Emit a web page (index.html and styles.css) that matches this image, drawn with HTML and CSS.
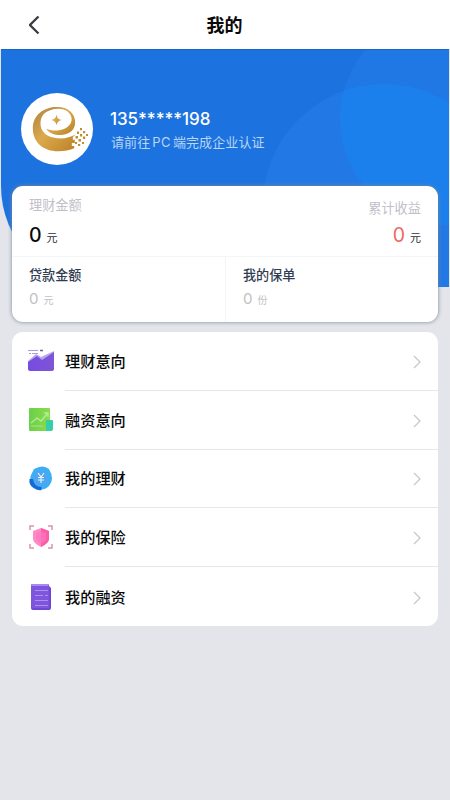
FILE: index.html
```
<!DOCTYPE html>
<html lang="zh-CN">
<head>
<meta charset="utf-8">
<meta name="viewport" content="width=device-width">
<title>我的</title>
<link rel="stylesheet" href="styles.css">
</head>
<body>
<header class="nav">
  <svg class="back" width="12" height="20" viewBox="0 0 12 20"><path d="M9.500 1.500 1 10l8.500 8.500" fill="none" stroke="#3c3d42" stroke-width="2.300"/></svg>
  <h1>我的</h1>
</header>
<main class="page">
  <svg class="backdrop" width="448" height="238" viewBox="1 49 448 238">
    <defs><clipPath id="hero"><path d="M1 49H449V287H102A101 101 0 0 1 1 186Z"/></clipPath>
    <clipPath id="orb"><circle cx="384" cy="205" r="121"/></clipPath></defs>
    <g clip-path="url(#hero)">
      <rect x="1" y="49" width="448" height="238" fill="#1c73df"/>
      <circle cx="446" cy="119" r="106" fill="#1f78e3"/>
      <circle cx="384" cy="205" r="121" fill="#2279e5"/>
      <circle cx="446" cy="119" r="106" fill="#1b80ec" clip-path="url(#orb)"/>
      <path d="M1 49.500H449" stroke="#1966c6"/>
    </g>
  </svg>
  <section class="profile">
    <svg class="avatar" width="72" height="72" viewBox="0 0 72 72">
      <defs><linearGradient id="gold" x1="0" y1="0" x2="1" y2="1"><stop offset="0" stop-color="#ad8040"/><stop offset=".45" stop-color="#dda94d"/><stop offset="1" stop-color="#b98125"/></linearGradient></defs>
      <circle cx="36" cy="36" r="36" fill="#fff"/>
      <g transform="scale(.3333) translate(-31.500 -24)" fill="url(#gold)">
        <path d="M140 66C100 66 67 90 67 130C67 174 100 199 143 199C162 199 178 196 191 190L191 183H184V174H193V164H187V156L196 148C180 158 160 162 140 160C105 156 89 137 90 114C91 88 110 73 140 70Z"/>
        <path d="M103 84C116 69 130 66 145 66C173 67 194 86 194 112C194 137 174 150 150 150C130 150 115 143 107 131C122 137 144 139 162 131C178 123 185 112 183 98C180 81 163 71 143 71C126 71 113 76 103 84Z"/>
        <path d="M138 89Q140 103 154 105Q140 107 138 121Q136 107 122 105Q136 103 138 89Z"/>
      </g>
      <path d="M59 35h2v2.200h-2zM56 38.500h2V41h-2zM62 38h2.200v2.200H62zM59 41h2.200v2.500H59zM65 41h2v2h-2zM54.500 43h2.500v2.500h-2.500zM62 43.500h2.200V46H62zM57.500 46h2.500v2.500h-2.500zM54 49h2v2h-2zM61 49h2v2h-2zM57 51h2.200v2H57z" fill="#c28d31"/>
    </svg>
    <div class="identity">
      <div class="phone">135*****198</div>
      <div class="notice">请前往<span class="latin">PC</span>端完成企业认证</div>
    </div>
  </section>
  <section class="assets">
    <div class="summary">
      <div><div class="label">理财金额</div><div class="amount">0<small>元</small></div></div>
      <div class="income"><div class="label">累计收益</div><div class="amount">0<small>元</small></div></div>
    </div>
    <div class="details">
      <div class="detail"><div class="name">贷款金额</div><div class="value">0<small>元</small></div></div>
      <div class="detail"><div class="name">我的保单</div><div class="value">0<small>份</small></div></div>
    </div>
  </section>
  <nav class="menu">
    <a class="item">
      <svg class="icon" width="28" height="28" viewBox="0 0 28 28"><defs><linearGradient id="violet" x1="0" x2="1"><stop stop-color="#754ce2"/><stop offset="1" stop-color="#8054d5"/></linearGradient></defs><path d="M1 14 9 7l5 3L27 4v18H1Z" fill="#b8a6f2"/><path d="M1 15 10 9l5 4L27 5v17q0 2-2 2H3q-2 0-2-2Z" fill="url(#violet)"/><path d="M1 3.500h10M2 6.500h2M5 6.500h6" stroke="#b29be5"/><path d="M13 3.500h3" stroke="#6860a0" stroke-width="1.500"/></svg>
      <div class="row"><span>理财意向</span><svg class="arrow" width="8" height="14" viewBox="0 0 8 14"><path d="m1 1 6 6-6 6"/></svg></div>
    </a>
    <a class="item">
      <svg class="icon" width="28" height="28" viewBox="0 0 28 28"><defs><linearGradient id="green" x1="0" x2="1"><stop stop-color="#6bd04b"/><stop offset="1" stop-color="#8bdc4b"/></linearGradient></defs><rect x="2" y="2" width="21" height="23" rx="1" fill="url(#green)"/><path d="M19 14h6q1 0 1 1v8q0 2-2 2h-5Z" fill="#35cea7"/><path d="m4 17 6-5 4 3 7-8M17 7h4v4" fill="none" stroke="#b5ec9b" stroke-width="1.300"/><path d="M4 20h12" stroke="#a5e48d"/></svg>
      <div class="row"><span>融资意向</span><svg class="arrow" width="8" height="14" viewBox="0 0 8 14"><path d="m1 1 6 6-6 6"/></svg></div>
    </a>
    <a class="item">
      <svg class="icon" width="28" height="28" viewBox="0 0 28 28"><path d="M7 4Q16-1 22 4Q28 14 22 21Q16 27 8 23Q1 18 4 10Z" fill="#3aaff6"/><path d="M2.500 14q-1 6 4 9t8 2v-3Q7 22 6 14Z" fill="#1768d7"/><circle cx="14" cy="13" r="7.500" fill="#50a5ef"/><path d="m11 8 3 4 3-4m-3 4v6m-3-5.500h6m-6 2.500h6" fill="none" stroke="#e5f6ff" stroke-width="1.100"/></svg>
      <div class="row"><span>我的理财</span><svg class="arrow" width="8" height="14" viewBox="0 0 8 14"><path d="m1 1 6 6-6 6"/></svg></div>
    </a>
    <a class="item">
      <svg class="icon" width="28" height="28" viewBox="0 0 28 28"><path d="M3 6V2h4m14 0h4v4m0 14v4h-4M7 24H3v-4" fill="none" stroke="#d795ad" stroke-width="1.500"/><path d="m14 4 8 3v8q0 4-8 8-8-4-8-8V7Z" fill="#ff8bc4"/><path d="m14 4 8 3v8q0 4-8 8Z" fill="#fb5da8"/><path d="m14 7 5 2v5q0 3-5 6-5-3-5-6V9Z" fill="#ff78bd" opacity=".7"/></svg>
      <div class="row"><span>我的保险</span><svg class="arrow" width="8" height="14" viewBox="0 0 8 14"><path d="m1 1 6 6-6 6"/></svg></div>
    </a>
    <a class="item">
      <svg class="icon" width="28" height="28" viewBox="0 0 28 28"><path d="M4 1h16q2 0 2 2l2 2v20q0 2-2 2H6q-2 0-2-2Z" fill="#6f47d4"/><path d="M4 1h16q2 0 2 2v22H6q-2 0-2-2Z" fill="#7e55dd"/><path d="M4 1h17v2H5q-1 0-1-1Z" fill="#aa8aef"/><path d="M8 7.500h13M8 12.500h8m2 0h3M8 17.500h13M8 22.500h13" stroke="#b18ff1"/></svg>
      <div class="row"><span>我的融资</span><svg class="arrow" width="8" height="14" viewBox="0 0 8 14"><path d="m1 1 6 6-6 6"/></svg></div>
    </a>
  </nav>
</main>
</body>
</html>
```
FILE: styles.css
```
* { box-sizing: border-box; }
body {
  margin: 0;
  height: 800px;
  overflow: hidden;
  background: #e3e5ea;
  color: #090909;
  font-family: Inter, "Noto Sans CJK SC", sans-serif;
}
.nav {
  height: 49px;
  padding: 1px 30px 0 29px;
  background: #fff;
  display: grid;
  grid-template-columns: 12px 1fr 12px;
  align-items: center;
}
.nav h1 {
  margin: 1px 0 0;
  text-align: center;
  font-size: 18px;
  line-height: 26px;
  font-weight: 700;
}
.page {
  position: relative;
  height: 751px;
  padding: 0 12px;
}
.backdrop { position: absolute; left: 1px; top: 0; }
.profile {
  position: relative;
  height: 137px;
  padding: 44px 9px 0;
  display: flex;
  gap: 17px;
}
.avatar { flex: none; }
.identity { color: #fff; padding-top: 14px; }
.phone { font-size: 17px; line-height: 24px; font-weight: 500; letter-spacing: -.05px; }
.notice {
  margin: 1px 0 0 1px;
  font-size: 13px;
  line-height: 20px;
  color: #b9d5f7;
  letter-spacing: .1px;
}
.latin { margin: 0 2px; letter-spacing: .4px; }
.assets {
  position: relative;
  height: 136px;
  border-radius: 11px;
  background: #fff;
  box-shadow: 0 0 4px #7d8795;
}
.summary {
  height: 70px;
  padding: 9px 17px 0;
  display: flex;
  justify-content: space-between;
}
.label { font-size: 13.200px; line-height: 20px; color: #bfc0c8; }
.amount { margin-top: 7px; font-size: 19.500px; line-height: 26px; font-weight: 500; }
.amount small { margin-left: 5px; font-size: 11px; font-weight: 400; color: #303034; }
.income { padding-top: 3px; text-align: right; }
.income .amount { margin-top: 4px; color: #ed6960; font-weight: 400; }
.details {
  height: 66px;
  border-top: 1px solid #f4f5f6;
  display: grid;
  grid-template-columns: 213px 1fr;
}
.detail { padding: 8px 17px 0; }
.detail + .detail { border-left: 1px solid #f4f5f6; }
.name { font-size: 13.100px; line-height: 20px; color: #303b50; font-weight: 500; }
.value { margin-top: 4px; font-size: 15px; line-height: 20px; color: #c0c1c5; }
.value small { margin-left: 5px; font-size: 10px; }
.menu {
  margin-top: 10px;
  height: 294px;
  border-radius: 11px;
  background: #fff;
  position: relative;
}
.item {
  height: 58.800px;
  padding-left: 15px;
  display: flex;
  align-items: center;
  gap: 10px;
}
.icon { flex: none; }
.row {
  height: 100%;
  flex: 1;
  padding: 2px 17px 0 0;
  border-bottom: 1px solid #e7e7ea;
  display: flex;
  align-items: center;
  justify-content: space-between;
  font-size: 15.200px;
  line-height: 24px;
  font-weight: 500;
}
.item:last-child .row { border-bottom: 0; }
.arrow { fill: none; stroke: #c8c8cc; stroke-width: 1.300; }
```
